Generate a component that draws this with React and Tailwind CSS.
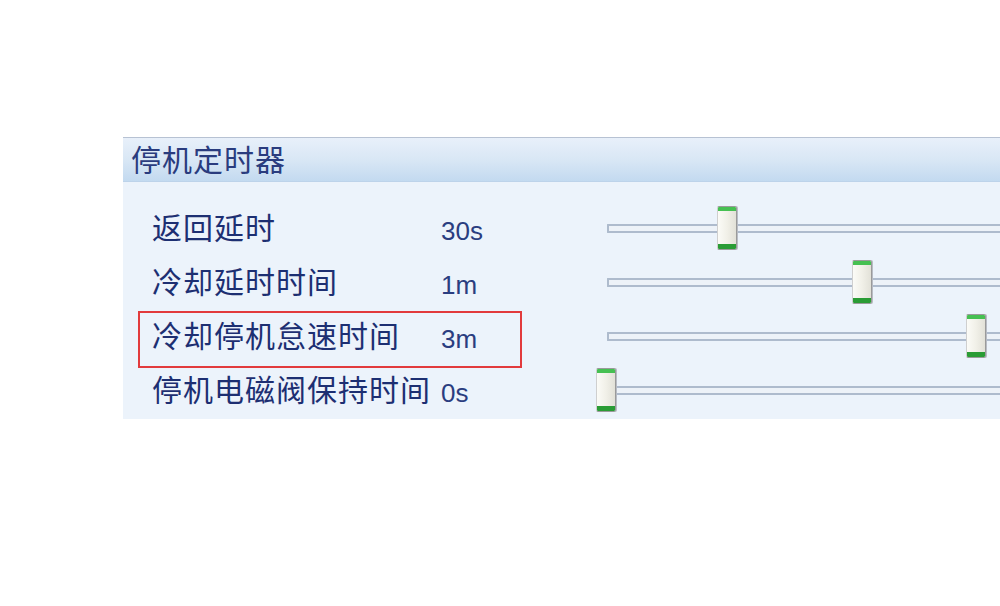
import React from "react";

const rows = [
  { label: "返回延时", value: "30s", pos: 121 },
  { label: "冷却延时时间", value: "1m", pos: 256 },
  { label: "冷却停机怠速时间", value: "3m", pos: 370, marked: true },
  { label: "停机电磁阀保持时间", value: "0s", pos: 0 },
];

const cjk = { fontFamily: '"Noto Sans CJK SC", "Noto Sans", sans-serif' };
const latin = { fontFamily: '"Liberation Sans", Arial, sans-serif' };

function Thumb({ left }) {
  return (
    <div
      className="absolute top-1/2 -translate-y-1/2 w-[20px] h-[44px] flex flex-col rounded-[2px] border border-[#9a9a9a] border-l-[#cfcfcf] shadow-[1px_0_0_#b8bcc4] overflow-hidden"
      style={{ left }}
    >
      <div className="h-[4px] bg-[#46c052]" />
      <div className="flex-1 bg-gradient-to-r from-[#fbfbf7] via-[#f1f0e8] to-[#e2e1d8]" />
      <div className="h-[5px] bg-[#2a9c35]" />
    </div>
  );
}

function Slider({ pos }) {
  return (
    <div className="relative flex-1 h-full flex items-center">
      <div className="ml-[11px] flex-1 h-[9px] border-2 border-r-0 border-[#aebbcd] bg-[#edf2f8] rounded-l-[1px]" />
      <Thumb left={pos} />
    </div>
  );
}

export default function App() {
  return (
    <div className="w-[1000px] h-[606px] bg-white overflow-hidden flex flex-col">
      <div className="mt-[137px] ml-[123px] flex-1 flex flex-col max-h-[282px]">
        <div className="h-[45px] border-t border-[#b7c2d3] border-b border-b-[#bdd3ea] bg-gradient-to-b from-[#e8f0fa] via-[#d9e7f5] to-[#c3daf0] flex items-center pl-[8px] pb-[3px]">
          <span
            className="text-[30px] leading-none tracking-[1px] text-[#2a3c7e]"
            style={cjk}
          >
            停机定时器
          </span>
        </div>
        <div className="flex-1 bg-[#ecf3fb] pt-[19px] flex flex-col">
          {rows.map((r) => (
            <div key={r.label} className="relative h-[54px] flex items-center">
              {r.marked && (
                <div className="absolute left-[15px] top-[2px] w-[384px] h-[57px] border-2 border-[#e23a3c] pointer-events-none" />
              )}
              <div
                className="w-[318px] pl-[29px] text-[30px] leading-none tracking-[1px] text-[#1d2f72] whitespace-nowrap pb-[4px]"
                style={cjk}
              >
                {r.label}
              </div>
              <div
                className="w-[155px] text-[26px] leading-none text-[#2a3d80] pt-[5px]"
                style={latin}
              >
                {r.value}
              </div>
              <Slider pos={r.pos} />
            </div>
          ))}
        </div>
      </div>
    </div>
  );
}
